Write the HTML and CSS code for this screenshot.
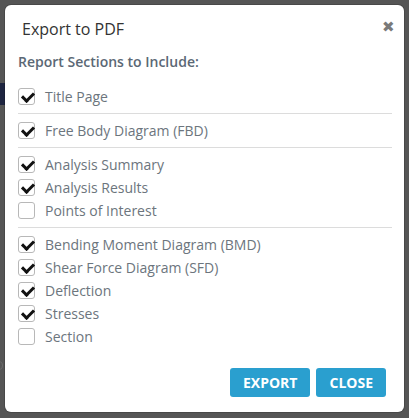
FILE: index.html
```html
<!DOCTYPE html>
<html>
<head>
<meta charset="utf-8">
<link rel="stylesheet" href="styles.css">
</head>
<body>
<div class="backdrop">
  <div class="ghost ghost-bar"></div>
  <div class="ghost ghost-arc"></div>
  <div class="modal">
    <div class="modal-header">
      <h4 class="title">Export to PDF</h4>
      <span class="close-x">&#x2716;</span>
    </div>
    <div class="modal-body">
      <div class="section-label">Report Sections to Include:</div>
      <div class="group">
        <label class="row"><span class="cb checked"></span>Title Page</label>
      </div>
      <div class="group">
        <label class="row"><span class="cb checked"></span>Free Body Diagram (FBD)</label>
      </div>
      <div class="group">
        <label class="row"><span class="cb checked"></span>Analysis Summary</label>
        <label class="row"><span class="cb checked"></span>Analysis Results</label>
        <label class="row"><span class="cb"></span>Points of Interest</label>
      </div>
      <div class="group last">
        <label class="row"><span class="cb checked"></span>Bending Moment Diagram (BMD)</label>
        <label class="row"><span class="cb checked"></span>Shear Force Diagram (SFD)</label>
        <label class="row"><span class="cb checked"></span>Deflection</label>
        <label class="row"><span class="cb checked"></span>Stresses</label>
        <label class="row"><span class="cb"></span>Section</label>
      </div>
    </div>
    <div class="modal-footer">
      <button class="btn">EXPORT</button>
      <button class="btn">CLOSE</button>
    </div>
  </div>
</div>
</body>
</html>
```
FILE: styles.css
```css
* { box-sizing: border-box; }
html, body { margin: 0; padding: 0; }
body {
  width: 409px;
  height: 418px;
  overflow: hidden;
  background: #555;
  font-family: "Open Sans", "Liberation Sans", sans-serif;
}
.backdrop {
  position: relative;
  width: 409px;
  height: 418px;
  padding: 5px 5px 0 5px;
}
.ghost { position: absolute; }
.ghost-bar {
  left: 0; top: 83px; width: 5px; height: 22px;
  background: #1e2540;
}
.ghost-arc {
  left: -5px; top: 361px; width: 8px; height: 9px;
  border: 1.5px solid #6a6a6a;
  border-radius: 50%;
}
.modal {
  position: relative;
  width: 399px;
  height: 407px;
  background: #fff;
  border-radius: 6px;
  box-shadow: 0 0 0 1px rgba(0,0,0,0.15);
  display: flex;
  flex-direction: column;
}
.modal-header {
  display: flex;
  justify-content: space-between;
  align-items: flex-start;
  padding: 14px 9px 0 17px;
  height: 41px;
}
.title {
  margin: 0;
  font-size: 16px;
  font-weight: 400;
  color: #333;
  line-height: 20px;
}
.close-x {
  font-size: 15px;
  color: #7a7a7a;
  line-height: 14px;
  margin-top: 0;
}
.modal-body {
  padding: 6px 12px 0 13px;
}
.section-label {
  font-size: 14px;
  font-weight: 600;
  color: #5b6875;
  line-height: 20px;
  margin-bottom: 13px;
}
.group {
  border-bottom: 1px solid #dcdcdc;
  padding-bottom: 5px;
  margin-bottom: 4px;
}
.group.last { border-bottom: none; }
.group + .group { padding-top: 1px; }
.row {
  display: flex;
  align-items: center;
  height: 23px;
  font-size: 14px;
  color: #6c757d;
}
.cb {
  width: 17px;
  height: 17px;
  border: 1px solid #b8b8b8;
  border-radius: 3px;
  margin-right: 10px;
  position: relative;
  flex: none;
}
.cb.checked::after {
  content: "";
  position: absolute;
  left: 5px;
  top: 1px;
  width: 5px;
  height: 9px;
  border: solid #111;
  border-width: 0 3px 3px 0;
  transform: rotate(45deg);
}
.modal-footer {
  margin-top: auto;
  display: flex;
  justify-content: flex-end;
  gap: 6px;
  padding: 0 18px 15px 0;
}
.btn {
  font-family: "Open Sans", "Liberation Sans", sans-serif;
  font-size: 14px;
  font-weight: 700;
  color: #fff;
  background: #2a9fcf;
  border: none;
  border-radius: 3px;
  height: 29px;
  padding: 0 13px;
}
```
